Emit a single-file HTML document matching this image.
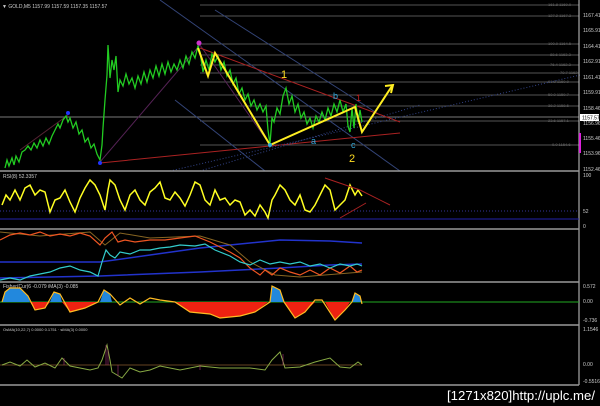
<!DOCTYPE html>
<html><head><meta charset="utf-8"><style>
html,body{margin:0;padding:0;background:#000;width:600px;height:406px;overflow:hidden}
svg{display:block}
text{font-family:"Liberation Sans",sans-serif}
</style></head><body>
<svg width="600" height="406" viewBox="0 0 600 406">
<rect width="600" height="406" fill="#000"/>
<g stroke="#555" stroke-width="1">
<line x1="200" y1="5" x2="579" y2="5"/><line x1="200" y1="16" x2="579" y2="16"/>
<line x1="200" y1="44" x2="579" y2="44"/><line x1="200" y1="55" x2="579" y2="55"/>
<line x1="200" y1="65" x2="579" y2="65"/><line x1="200" y1="73" x2="579" y2="73"/>
<line x1="200" y1="82" x2="579" y2="82"/><line x1="200" y1="95" x2="579" y2="95"/>
<line x1="200" y1="106" x2="579" y2="106"/><line x1="200" y1="121" x2="579" y2="121"/>
<line x1="200" y1="145" x2="579" y2="145"/>
</g>
<line x1="0" y1="117" x2="579" y2="117" stroke="#777"/>
<g font-size="4" fill="#666">
<text x="548" y="6">161.8 1169.0</text><text x="548" y="17">127.2 1167.3</text>
<text x="548" y="45">100.0 1164.5</text><text x="550" y="56">88.6 1163.3</text>
<text x="550" y="66">76.4 1162.3</text><text x="560" y="74">70.7 1162</text>
<text x="548" y="83">61.8 1160.9</text><text x="548" y="96">50.0 1159.7</text>
<text x="548" y="107">38.2 1158.5</text><text x="548" y="122">23.6 1157.1</text>
<text x="552" y="146">0.0 1154.6</text>
</g>
<g fill="none" stroke-width="1">
<line x1="160" y1="0" x2="400" y2="171" stroke="#334477"/>
<line x1="215" y1="10" x2="380" y2="115" stroke="#334477"/>
<line x1="175" y1="100" x2="265" y2="171" stroke="#334477"/>
<line x1="100" y1="162" x2="200" y2="45" stroke="#552255"/>
<line x1="20" y1="150" x2="68" y2="115" stroke="#552233"/>
<line x1="200" y1="45" x2="270" y2="145" stroke="#552255"/>
<line x1="100" y1="163" x2="400" y2="133" stroke="#aa2222"/>
<line x1="200" y1="48" x2="400" y2="122" stroke="#aa2222"/>
<line x1="170" y1="171" x2="580" y2="75" stroke="#334488" stroke-dasharray="1,2"/>
<line x1="200" y1="171" x2="420" y2="105" stroke="#334488" stroke-dasharray="1,2"/>
</g>
<g fill="none" stroke="#22cc22" stroke-width="1.3">
<polyline points="5,168 7,160 9,166 12,158 14,165 16,156 19,162 22,152 25,150 28,146 31,150 34,143 37,148 40,140 43,146 46,138 49,144 52,136 55,130 58,124 60,128 63,120 66,116 68,122 70,118 73,128 76,122 79,134 82,130 85,142 88,138 91,148 94,144 97,154 100,160 102,145 103,128 105,100 107,75 108,45 110,78 112,60 114,70 116,56 118,92 120,80 123,86 126,74 129,84 132,78 135,88 138,76 141,84 144,72 147,82 150,70 153,78 156,66 159,76 162,64 165,74 168,62 171,72 174,64 177,70 180,60 183,68 186,56 189,64 192,52 195,58 198,46 200,52 203,72 206,60 209,70 212,54 215,62 218,56 221,70 224,62 227,76 230,70 233,84 236,78 239,94 242,88 245,100 248,94 251,106 254,100 257,110 260,104 263,112 266,106 268,130 270,144 272,118 274,122 277,108 280,114 283,96 286,88 289,104 292,96 295,112 298,104 301,118 304,112 307,124 310,118 313,128 316,116 319,122 322,112 325,120 328,108 331,116 334,104 337,112 340,100 343,112 346,104 348,126 350,132 352,108 354,128 356,104 358,122 360,110 362,122"/>
</g>
<polyline fill="none" stroke="#ffee22" stroke-width="2" points="198,48 208,76 215,53 270,145 355,107 362,132 392,86"/>
<polyline fill="none" stroke="#ffee22" stroke-width="2" points="385,86 393,85 391,93"/>
<g font-size="11">
<text x="281" y="78" fill="#ffdd22">1</text>
<text x="349" y="162" fill="#ffdd22">2</text>
<text x="333" y="99" fill="#33aadd" font-size="9">b</text>
<text x="311" y="144" fill="#33aadd" font-size="9">a</text>
<text x="351" y="148" fill="#33aadd" font-size="9">c</text>
<text x="356" y="101" fill="#cc2222" font-size="9">1</text>
</g>
<circle cx="68" cy="113" r="2" fill="#2233ff"/><circle cx="100" cy="163" r="2" fill="#2233ff"/>
<circle cx="199" cy="43" r="2.5" fill="#cc33cc"/><circle cx="270" cy="145" r="2" fill="#33aadd"/>
<text x="2" y="8" font-size="5" fill="#ccc">▼ GOLD,M5  1157.99 1157.59 1157.35 1157.57</text>
<line x1="579" y1="0" x2="579" y2="385" stroke="#ccc"/>
<g font-size="5" fill="#ccc">
<text x="583" y="17">1167.41</text><text x="583" y="32">1165.91</text><text x="583" y="48">1164.41</text>
<text x="583" y="63">1162.91</text><text x="583" y="79">1161.41</text><text x="583" y="94">1159.91</text>
<text x="583" y="110">1158.46</text><text x="583" y="125">1156.96</text><text x="583" y="140">1155.46</text>
<text x="583" y="155">1153.96</text><text x="583" y="171">1152.46</text>
<text x="583" y="177">100</text><text x="583" y="213">52</text><text x="583" y="228">0</text>
<text x="583" y="288">0.572</text><text x="583" y="303">0.00</text><text x="583" y="322">-0.736</text>
<text x="583" y="331">1.1546</text><text x="583" y="366">0.00</text><text x="583" y="383">-0.5516</text>
</g>
<rect x="580" y="114" width="19" height="7" fill="#fff"/><text x="582" y="119.5" font-size="5" fill="#000">1157.57</text>
<rect x="579" y="133" width="2" height="20" fill="#dd22dd"/>
<g stroke="#999" stroke-width="1.5">
<line x1="0" y1="171" x2="579" y2="171"/><line x1="0" y1="229" x2="579" y2="229"/>
<line x1="0" y1="282" x2="579" y2="282"/><line x1="0" y1="325" x2="579" y2="325"/>
<line x1="0" y1="385" x2="579" y2="385"/>
</g>
<text x="3" y="178" font-size="5" fill="#ccc">RSI(8) 52.3357</text>
<line x1="0" y1="211" x2="579" y2="211" stroke="#333399" stroke-dasharray="1,2"/>
<line x1="0" y1="219" x2="579" y2="219" stroke="#2222aa"/>
<polyline fill="none" stroke="#ffff22" stroke-width="1.5" points="2,205 6,195 10,200 15,190 20,200 25,188 30,185 35,195 40,190 45,192 50,212 55,200 60,198 65,190 70,202 75,212 80,198 85,188 90,180 95,185 100,195 105,210 108,190 110,180 115,185 120,200 125,210 130,195 135,190 140,200 145,205 150,192 155,188 160,182 165,198 170,200 175,192 180,198 185,206 190,195 195,182 200,185 205,200 210,205 215,190 220,200 225,198 230,205 235,200 240,202 245,215 250,210 255,216 260,205 265,212 268,218 272,200 275,195 280,185 285,190 290,200 295,205 300,195 305,210 310,212 315,205 320,195 325,185 330,190 335,210 340,205 345,200 350,185 355,195 358,190 362,196"/>
<polyline fill="none" stroke="#aa2222" points="325,178 360,190 390,205"/>
<line x1="340" y1="218" x2="366" y2="203" stroke="#aa2222"/>
<polyline fill="none" stroke="#2233cc" stroke-width="1.5" points="0,262 100,262 200,248 280,240 330,241 362,243"/>
<polyline fill="none" stroke="#2233cc" stroke-width="1.5" points="0,278 100,276 200,272 280,268 330,265 362,264"/>
<polyline fill="none" stroke="#886622" stroke-width="1" points="0,232 40,236 90,232 105,245 120,233 150,238 200,236 230,245 250,262 275,275 300,277 362,272"/>
<polyline fill="none" stroke="#ee5522" stroke-width="1.2" points="0,240 10,235 20,233 30,235 40,232 50,236 60,234 70,236 80,233 90,236 100,245 105,238 112,232 118,242 125,240 135,242 150,240 165,240 180,238 195,236 210,242 230,252 240,258 250,268 260,275 265,270 272,275 280,268 290,272 300,275 310,270 320,275 330,268 340,273 350,266 357,272 362,270"/>
<polyline fill="none" stroke="#33cccc" stroke-width="1.2" points="0,280 10,278 20,280 30,276 40,274 50,272 60,268 70,266 80,270 90,272 98,276 102,262 106,250 110,255 115,258 120,252 130,254 140,250 150,250 160,248 170,247 180,245 195,246 205,244 215,250 230,256 240,262 250,265 260,260 270,264 280,262 290,264 300,262 310,266 320,264 330,268 340,264 350,266 357,264 362,266"/>
<text x="3" y="288" font-size="5" fill="#ccc">Fisher(Cur)6 -0.079  iMA(3) -0.085</text>
<line x1="0" y1="302" x2="579" y2="302" stroke="#22aa22"/>
<g fill="#2288dd">
<polygon points="2,302 5,292 10,288 20,288 28,296 30,302"/>
<polygon points="50,302 54,292 60,294 62,302"/>
<polygon points="100,302 104,290 110,294 112,302"/>
<polygon points="270,302 272,286 280,290 284,302"/>
<polygon points="352,302 355,293 360,296 362,302"/>
</g>
<g fill="#ee2211">
<polygon points="30,302 35,310 45,308 50,302"/>
<polygon points="62,302 70,312 85,308 98,302"/>
<polygon points="175,302 190,312 210,314 220,318 240,316 255,312 268,302"/>
<polygon points="284,302 295,318 305,312 315,302"/>
<polygon points="325,302 335,320 345,310 350,302"/>
</g>
<polyline fill="none" stroke="#ffbb22" stroke-width="1.2" points="2,302 5,292 10,288 20,288 28,296 35,310 45,308 54,292 60,294 70,312 85,308 98,302 104,290 110,294 120,305 130,298 140,304 150,298 160,300 175,302 190,312 210,314 220,318 240,316 255,312 270,302 272,286 280,290 284,302 295,318 305,312 315,300 322,300 335,320 345,310 352,302 355,293 360,296 362,304"/>
<text x="3" y="331" font-size="4" fill="#ccc">OsMA(10,22,7) 0.0000 0.1751 · siMA(3) 0.0000</text>
<line x1="0" y1="365" x2="362" y2="365" stroke="#664422"/>
<polyline fill="none" stroke="#88aa44" stroke-width="1" points="2,365 10,362 20,366 27,360 35,367 45,363 55,368 62,358 70,366 80,368 90,370 98,368 102,360 107,345 110,360 112,372 122,378 130,368 140,372 150,370 160,366 180,370 200,366 220,368 250,368 265,370 272,360 280,352 285,368 300,367 315,362 330,358 340,367 350,368 358,362 362,365"/>
<g stroke="#aa3377" stroke-width="0.6">
<line x1="106" y1="365" x2="106" y2="345"/><line x1="108" y1="365" x2="108" y2="350"/><line x1="64" y1="365" x2="64" y2="358"/>
<line x1="283" y1="365" x2="283" y2="354"/><line x1="118" y1="365" x2="118" y2="376"/><line x1="200" y1="365" x2="200" y2="370"/>
</g>
<text x="447" y="400" font-size="13" fill="#fff" textLength="148" lengthAdjust="spacingAndGlyphs">[1271x820]http://uplc.me/</text>
</svg>
</body></html>
